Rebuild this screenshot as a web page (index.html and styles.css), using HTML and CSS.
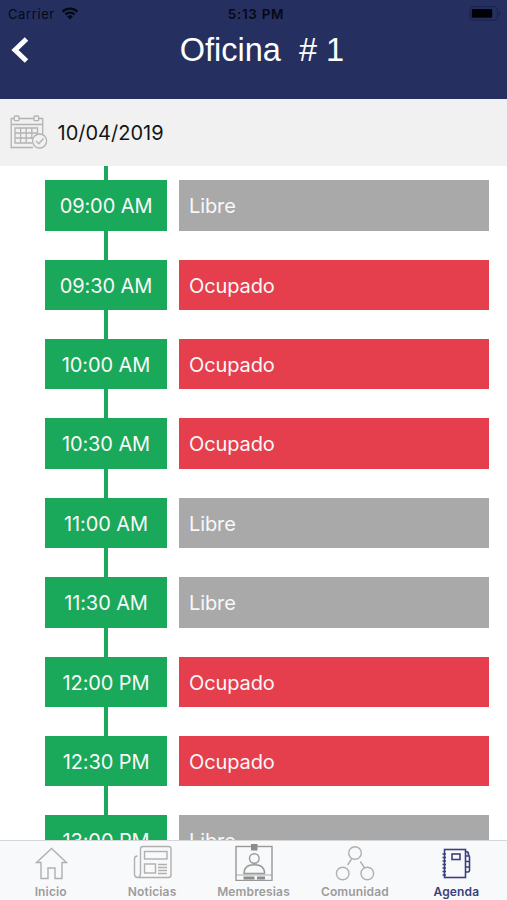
FILE: index.html
```html
<!DOCTYPE html>
<html lang="es">
<head>
    <meta charset="UTF-8">
    <meta name="viewport" content="width=device-width, initial-scale=1.0">
    <title>Agenda</title>
    <link rel="stylesheet" href="styles.css">
</head>
<body>
    <div class="app">
        <header class="header">
            <div class="status-bar">
                <div class="carrier">
                    <span class="carrier-name">Carrier</span>
                    <svg class="wifi" viewBox="0 0 18 14" width="18" height="14">
                        <path d="M1.6 4.7a10.6 10.6 0 0 1 14.8 0M4.3 7.5a6.8 6.8 0 0 1 9.4 0" fill="none" stroke="#060914" stroke-width="2.2"/>
                        <path d="M6.2 9.5a4 4 0 0 1 5.6 0L9 12.5z" fill="#060914"/>
                    </svg>
                </div>
                <span class="clock">5:13 PM</span>
                <svg class="battery" viewBox="0 0 32 16" width="32" height="16">
                    <rect x="1" y="0.7" width="27.5" height="13.5" rx="4" fill="none" stroke="#1b2450" stroke-width="1.3"/>
                    <rect x="2.8" y="3" width="20.4" height="8.8" rx="1" fill="#010206"/>
                    <path d="M30 5.5v4q1.3-.6 1.3-2T30 5.5z" fill="#1b2450"/>
                </svg>
            </div>
            <div class="nav-bar">
                <svg class="back" viewBox="0 0 18 28" width="18" height="28">
                    <path d="M15.5 3L4 14l11.5 11" fill="none" stroke="#fff" stroke-width="5"/>
                </svg>
                <h1>Oficina&nbsp; # 1</h1>
            </div>
        </header>

        <div class="date-bar">
            <svg class="calendar" viewBox="0 0 38 34" width="38" height="34" fill="none" stroke="#b3b3b3" stroke-width="1.3">
                <path d="M23 32.5H1.2V3.5h3M9 3.5h15M28.7 3.5h4v15.5M1.2 9.5h31.5"/>
                <rect x="4.3" y="1" width="4.7" height="4.7" rx="1"/>
                <rect x="24" y="1" width="4.7" height="4.7" rx="1"/>
                <path d="M22 28H5V13h22.5v6M5 18h22.5M5 23h18M10.6 13v15M16.2 13v15M21.8 13v11"/>
                <circle cx="29.6" cy="26" r="7"/>
                <path d="M26 26l2.7 2.7 4.8-5.2"/>
            </svg>
            <span class="date">10/04/2019</span>
        </div>

        <main class="timeline">
            <div class="slot"><div class="hour">09:00 AM</div><div class="state free">Libre</div></div>
            <div class="slot"><div class="hour">09:30 AM</div><div class="state busy">Ocupado</div></div>
            <div class="slot"><div class="hour">10:00 AM</div><div class="state busy">Ocupado</div></div>
            <div class="slot"><div class="hour">10:30 AM</div><div class="state busy">Ocupado</div></div>
            <div class="slot"><div class="hour">11:00 AM</div><div class="state free">Libre</div></div>
            <div class="slot"><div class="hour">11:30 AM</div><div class="state free">Libre</div></div>
            <div class="slot"><div class="hour">12:00 PM</div><div class="state busy">Ocupado</div></div>
            <div class="slot"><div class="hour">12:30 PM</div><div class="state busy">Ocupado</div></div>
            <div class="slot"><div class="hour">13:00 PM</div><div class="state free">Libre</div></div>
        </main>

        <nav class="tab-bar">
            <a class="tab">
                <svg viewBox="0 0 40 40" width="40" height="40">
                    <path d="M20.5 7.5L5.5 21.5H10v16h7V27h7v10.5h7v-16h4.5z"/>
                </svg>
                <span>Inicio</span>
            </a>
            <a class="tab">
                <svg viewBox="0 0 40 40" width="40" height="40">
                    <path d="M8.5 32V8q0-2.5 2.5-2.5h25.5q2.5 0 2.5 2.5v26q0 2.5-2.5 2.5H6q-3.5 0-3.5-3.5V18q0-3 3-3M8.5 32q0 4.5-3 4.5"/>
                    <rect x="12.5" y="10.5" width="22.5" height="7.5"/>
                    <rect x="12.5" y="23" width="11" height="9"/>
                    <path d="M26 23.5h9M26 26.5h9M26 29.5h9M26 32.5h9"/>
                </svg>
                <span>Noticias</span>
            </a>
            <a class="tab member">
                <svg viewBox="0 0 40 40" width="40" height="40">
                    <rect x="2" y="5.5" width="36" height="34"/>
                    <rect class="solid" x="17" y="3" width="6.5" height="6.5"/>
                    <circle cx="20.3" cy="17.5" r="4.8"/>
                    <path d="M10 32.5q0-8.8 10.3-8.8T30.6 32.5z"/>
                    <path d="M2 34h36" stroke-width="0.8"/>
                    <path class="solid" d="M9.5 35.5h11v3h-11zM23 35.5h8v3h-8z"/>
                </svg>
                <span>Membresias</span>
            </a>
            <a class="tab">
                <svg viewBox="0 0 40 40" width="40" height="40">
                    <circle cx="20" cy="12" r="6.3"/>
                    <circle cx="7.7" cy="32.5" r="6.3"/>
                    <circle cx="32.3" cy="32.5" r="6.3"/>
                    <path d="M16.6 18l-4 6M25.3 20.5l4 6"/>
                </svg>
                <span>Comunidad</span>
            </a>
            <a class="tab active">
                <svg viewBox="0 0 40 40" width="40" height="40">
                    <rect x="8.5" y="8.5" width="21" height="28"/>
                    <rect x="16" y="13" width="8" height="5.5"/>
                    <path d="M6.5 13H10M6.5 16.5H10M6.5 20H10M6.5 23.5H10M6.5 27H10M6.5 30.5H10M6.5 34H10"/>
                    <path d="M29.5 10.5q3 0 3 2.5v1.5q1 0 1 1.5v13q0 2-1.5 2h-2.5M29.5 15h3.5M29.5 20.5h4M29.5 26h4"/>
                </svg>
                <span>Agenda</span>
            </a>
        </nav>
    </div>
</body>
</html>
```

FILE: styles.css
```css
* {
    box-sizing: border-box;
}

body {
    margin: 0;
    font-family: Inter, "Liberation Sans", sans-serif;
    background-color: #fff;
}

.app {
    display: flex;
    flex-direction: column;
    width: 100%;
    height: 900px;
    overflow: hidden;
}

.header {
    flex: none;
    height: 98.5px;
    background-color: #253061;
}

.status-bar {
    display: grid;
    grid-template-columns: 1fr auto 1fr;
    align-items: center;
    height: 27px;
    padding: 0 6px 0 8px;
    color: #060914;
    font-size: 13px;
}

.carrier {
    display: flex;
    align-items: center;
    gap: 6px;
}

.carrier-name {
    letter-spacing: 0.6px;
}

.clock {
    padding-left: 3px;
    font-size: 13.5px;
    font-weight: 600;
    letter-spacing: 0.7px;
}

.battery {
    justify-self: end;
}

.nav-bar {
    display: grid;
    grid-template-columns: 40px 1fr 40px;
    align-items: center;
    height: 46px;
    padding-left: 11px;
}

.nav-bar h1 {
    margin: 0;
    padding: 1px 0 0 6px;
    color: #fff;
    font-family: "Liberation Sans", sans-serif;
    font-size: 32.5px;
    font-weight: normal;
    text-align: center;
}

.date-bar {
    flex: none;
    display: flex;
    align-items: center;
    gap: 9.5px;
    height: 67px;
    padding-left: 10px;
    background-color: #f1f1f1;
}

.date {
    padding-top: 1px;
    color: #151515;
    font-size: 20px;
}

.timeline {
    flex: 1;
    min-height: 0;
    overflow: hidden;
    padding: 0 18px 0 45px;
    background: linear-gradient(#1aa85b, #1aa85b) 104px 0 / 4px 100% no-repeat;
}

.slot {
    display: flex;
    gap: 12px;
    height: 79.4px;
    padding-top: 14.8px;
}

.hour,
.state {
    height: 50.4px;
    line-height: 53px;
    color: #f8f8f8;
    font-size: 20px;
    letter-spacing: -0.1px;
}

.hour {
    width: 122px;
    background-color: #1aa85b;
    text-align: center;
}

.state {
    flex: 1;
    padding-left: 10px;
}

.free {
    background-color: #a9a9a9;
}

.busy {
    background-color: #e53e4c;
}

.tab-bar {
    flex: none;
    display: flex;
    height: 60px;
    border-top: 1px solid #d4d6d7;
    background-color: #f8f9fa;
}

.tab {
    flex: 1;
    display: flex;
    flex-direction: column;
    align-items: center;
    color: #9c9c9c;
    font-size: 12px;
    font-weight: 600;
    letter-spacing: 0.15px;
}

.tab svg {
    flex: none;
    fill: none;
    stroke: #b0b0b0;
    stroke-width: 1.4;
}

.tab span {
    margin-top: 4px;
    line-height: 14px;
}

.member svg {
    stroke: #999;
}

.tab .solid {
    fill: #8c8c8c;
    stroke: none;
}

.active {
    color: #3c3f7c;
}

.active svg {
    stroke: #3c3f7c;
    stroke-width: 1.6;
}
```
